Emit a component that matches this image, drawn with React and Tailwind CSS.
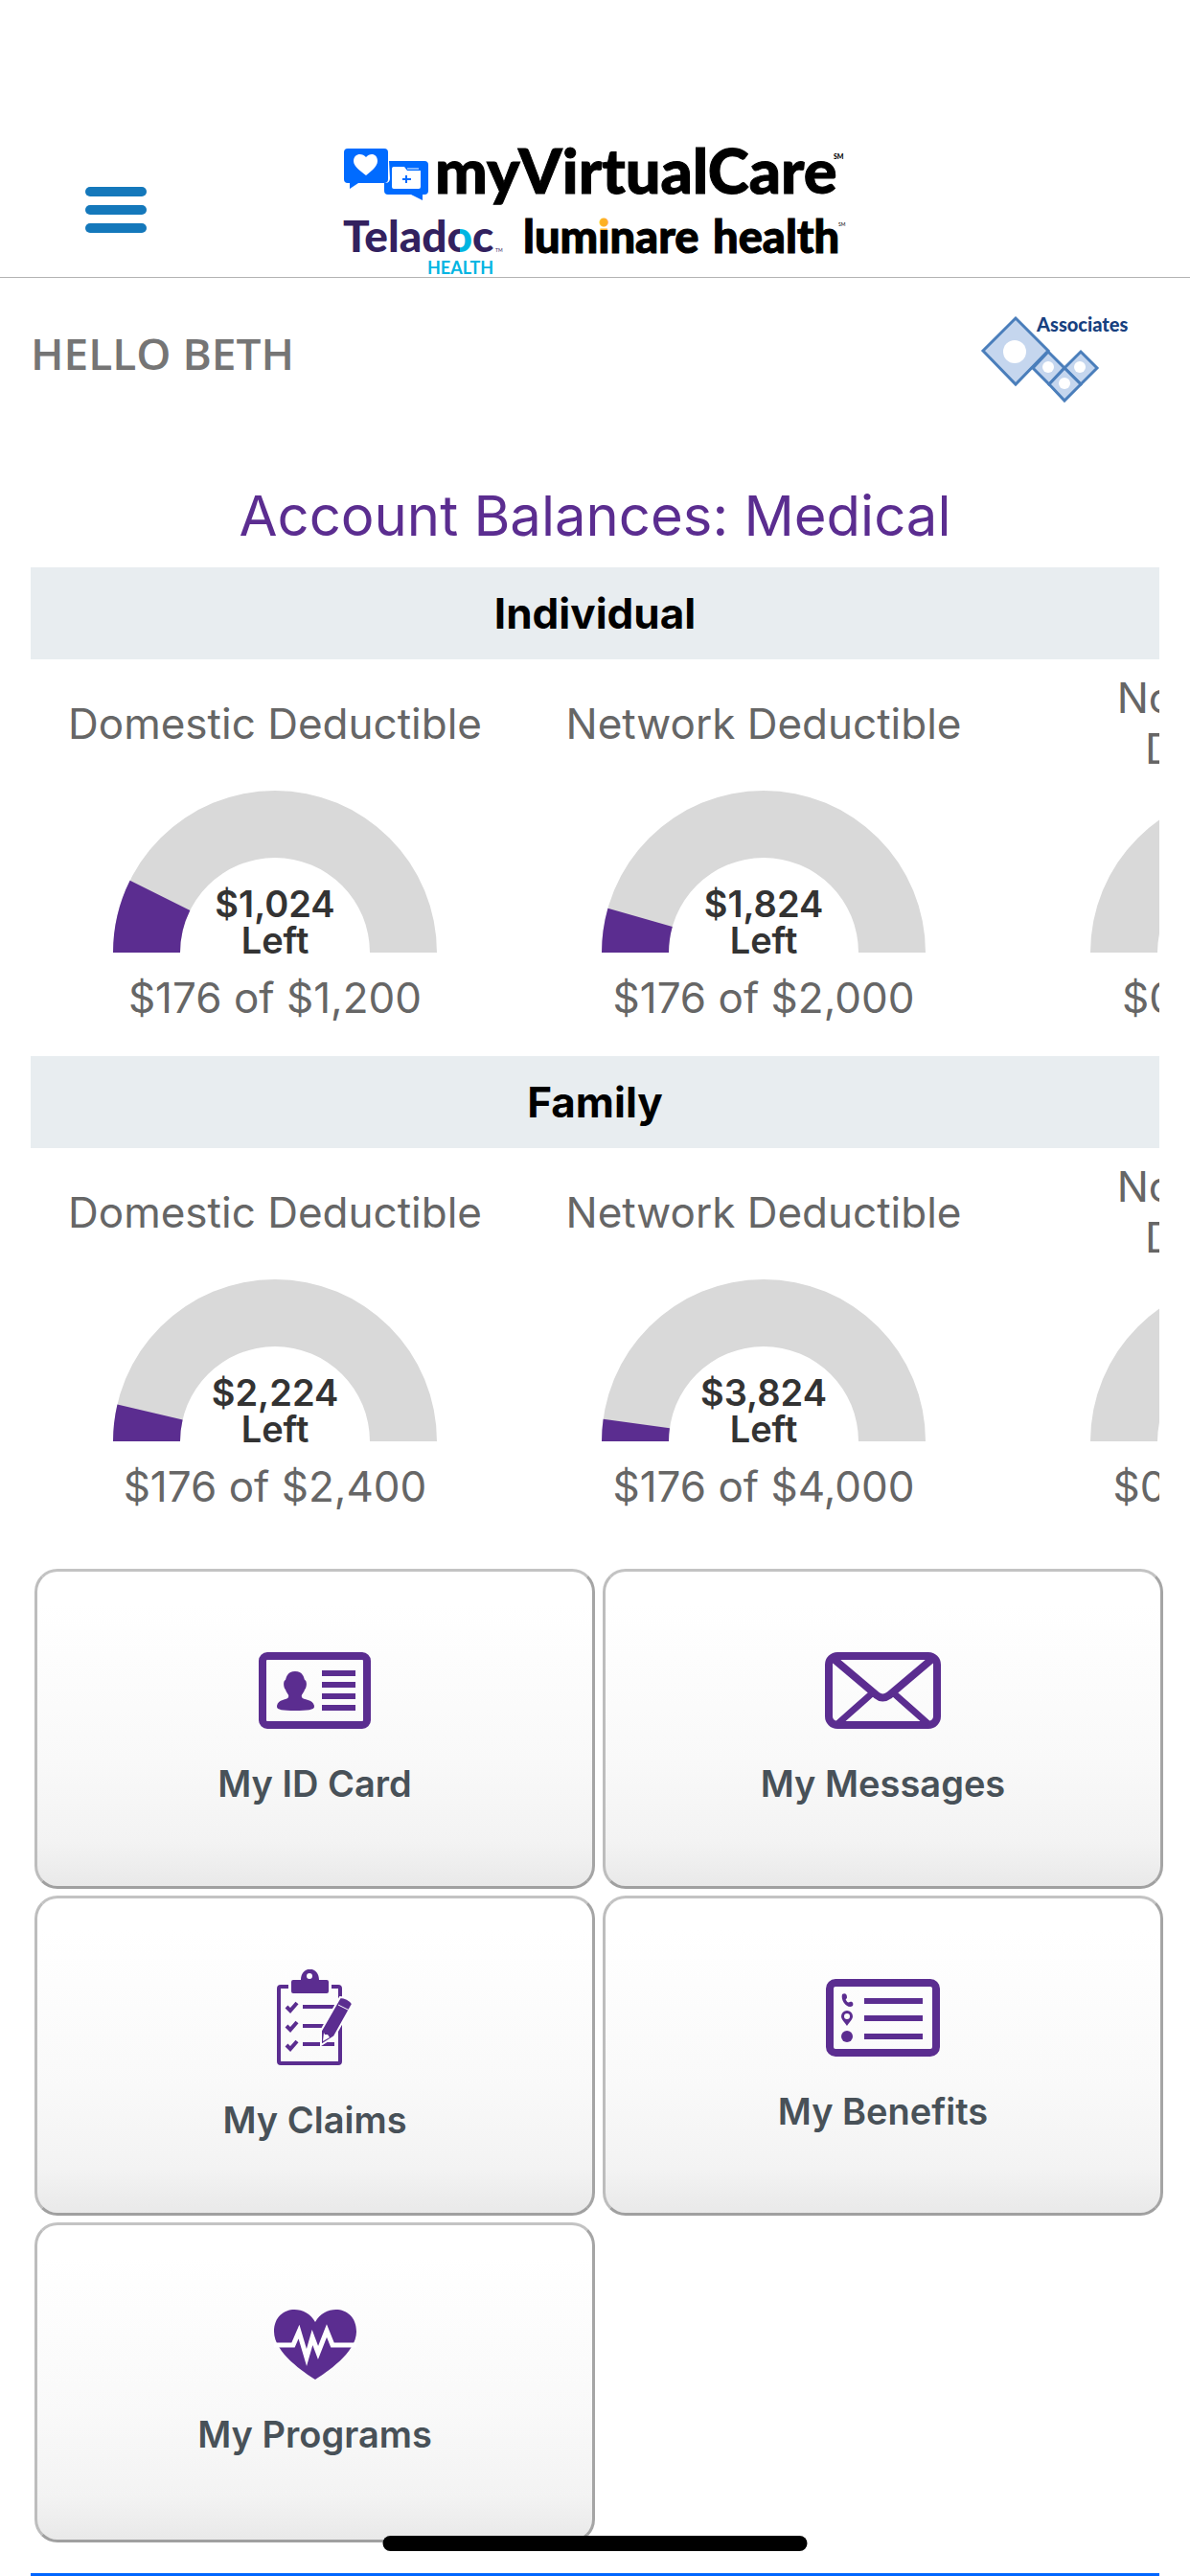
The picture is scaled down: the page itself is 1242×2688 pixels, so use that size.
const balances = [
  {
    title: "Individual",
    items: [
      { label: "Domestic Deductible", used: 176, total: 1200 },
      { label: "Network Deductible", used: 176, total: 2000 },
      { label: "Non-Network Deductible", used: 0, total: 5000 },
    ],
  },
  {
    title: "Family",
    items: [
      { label: "Domestic Deductible", used: 176, total: 2400 },
      { label: "Network Deductible", used: 176, total: 4000 },
      { label: "Non-Network Deductible", used: 0, total: 10000 },
    ],
  },
];

const money = (n) => "$" + n.toLocaleString("en-US");

function Logo() {
  return (
    <svg width="526" height="141" viewBox="358 148 526 141" className="overflow-visible" role="img" aria-label="myVirtualCare">
      <defs>
        {/* two-tone "o" and orange i-dot */}
        <linearGradient id="tone-o" gradientUnits="userSpaceOnUse" x1="466" y1="0" x2="494" y2="0">
          <stop offset="0.5" stopColor="#32215f" />
          <stop offset="0.5" stopColor="#00b5e2" />
        </linearGradient>
        <linearGradient id="tone-i" gradientUnits="userSpaceOnUse" x1="0" y1="230" x2="0" y2="249">
          <stop offset="0.5" stopColor="#fdb022" />
          <stop offset="0.5" stopColor="#000" />
        </linearGradient>
      </defs>

      {/* chat bubbles */}
      <path d="M363 155h38q4 0 4 4v28q0 4-4 4h-27l-9 6v-6h-2q-4 0-4-4v-28q0-4 4-4z" fill="#006bff" />
      <path
        d="M382 183c-5-4-13-9-13-15 0-8 9-9 13-4 4-5 12-4 12 4 0 6-7 11-12 15z"
        fill="#fff"
      />
      <path d="M406 168h37q4 0 4 4v27q0 4-4 4h-2v6l-12-6h-24q-4 0-4-4v-8h1q5 0 5-5z" fill="#006bff" />
      <path d="M409 176q0-2 2-2h11l3 4h14v17q0 2-2 2h-26q-2 0-2-2z" fill="#fff" />
      <path d="M425 176h12" stroke="#fff" strokeWidth="1" />
      <path d="M424 183v8M420 187h9" stroke="#006bff" strokeWidth="2" />

      <g fontFamily="Lato, sans-serif">
        <text x="454" y="202" fontSize="65" fontWeight="900" fill="#000" stroke="#000">myVirtualCare</text>
        <text x="870" y="166" fontSize="7" fontWeight="900" fill="#000">SM</text>
        <text x="358" y="263" fontSize="46" fontWeight="900" fill="#32215f">
          Telad<tspan fill="url(#tone-o)">o</tspan>c
        </text>
        <text x="517" y="263" fontSize="5" fill="#32215f">TM</text>
        <text x="446" y="286" fontSize="18" fontWeight="700" fill="#00b5e2">HEALTH</text>
        <text x="546" y="264" fontSize="47" fontWeight="900" fill="#000" stroke="#000">
          lum<tspan fill="url(#tone-i)" stroke="url(#tone-i)">i</tspan>nare
        </text>
        <text x="744" y="264" fontSize="47" fontWeight="900" fill="#000" stroke="#000">health</text>
        <text x="875" y="236" fontSize="5" fill="#000">SM</text>
      </g>
    </svg>
  );
}

function AssociatesLogo() {
  return (
    <svg width="154" height="90" viewBox="1023 330 154 90" className="overflow-visible" role="img" aria-label="Associates">
      <g fill="#c5d6ee" stroke="#4a7ebb" strokeWidth="3">
        <path d="M1059 332l34 34-34 35-34-35z" />
        <path d="M1093 367l17 17-16 17-17-17z" />
        <path d="M1127 367l17 17-17 17-17-17z" />
        <path d="M1110 384l17 17-17 17-16-17z" />
      </g>
      <g fill="#fff">
        <circle cx="1058" cy="367" r="12" />
        <circle cx="1093" cy="383" r="6" />
        <circle cx="1126" cy="383" r="6" />
        <circle cx="1110" cy="400" r="6" />
      </g>
      <text x="1081" y="346" fontSize="20" fontWeight="900" fontFamily="Lato, sans-serif" fill="#17407f">
        Associates
      </text>
    </svg>
  );
}

function Gauge({ used, total }) {
  // half ring, filled from the left end
  const angle = Math.PI * (used / total);
  const cos = Math.cos(angle);
  const sin = Math.sin(angle);
  const R = 169;
  const r = 99;

  return (
    <div className="relative mt-[17px]">
      <svg width="338" height="169" viewBox="0 0 338 169" aria-hidden="true">
        <path d="M0 169a169 169 0 0 1 338 0h-70a99 99 0 0 0-198 0z" fill="#d9d9d9" />
        {used > 0 && (
          <path
            d={`M0 169A${R} ${R} 0 0 1 ${R - R * cos} ${R - R * sin}L${R - r * cos} ${R - r * sin}A${r} ${r} 0 0 0 70 169z`}
            fill="#5b2d90"
          />
        )}
      </svg>
      <p className="absolute inset-x-0 -bottom-1.5 text-center text-[38px] leading-[38px] font-semibold text-[#333]">
        {money(total - used)}
        <br />
        Left
      </p>
    </div>
  );
}

function BalanceSection({ title, items }) {
  return (
    <section>
      <h2 className="bg-[#e8edf0] text-center text-[44px] leading-[96px] font-bold text-black">{title}</h2>
      <div className="flex overflow-x-auto pt-[14px] pb-[34px] [scrollbar-width:none]">
        {items.map((item) => (
          <div key={item.label} className="flex w-[510px] shrink-0 flex-col items-center text-[44px] leading-[53px] text-[#666]">
            <h3 className="flex h-[106px] items-center px-8 text-center">{item.label}</h3>
            <Gauge used={item.used} total={item.total} />
            <p className="mt-[21px]">
              {money(item.used)} of {money(item.total)}
            </p>
          </div>
        ))}
      </div>
    </section>
  );
}

function IdCardIcon() {
  return (
    <svg width="117" height="80" viewBox="0 0 117 80" fill="#5b2d90">
      <rect x="4" y="4" width="109" height="72" rx="5" fill="none" stroke="#5b2d90" strokeWidth="8" />
      <path d="M38 20c8 0 9 6 10 9 3 1 2 9 0 10-1 4-4 5-3 8 1 3 13 2 13 10 0 3-7 4-20 4s-19-1-19-4c0-8 11-7 12-10 1-3-2-4-3-8-2-1-3-9 0-10 1-3 2-9 10-9z" />
      <path d="M66 19h35v6H66zM66 31h35v6H66zM66 43h35v6H66zM66 55h35v6H66z" />
    </svg>
  );
}

function MailIcon() {
  return (
    <svg width="121" height="80" viewBox="0 0 121 80" fill="none" stroke="#5b2d90" strokeWidth="8">
      <rect x="4" y="4" width="113" height="72" rx="9" />
      <path d="M9 7l45 38q6 5 13 0l45-38" />
      <path d="M13 75l35-31M108 75L73 44" strokeWidth="7" />
    </svg>
  );
}

function ClaimsIcon() {
  return (
    <svg width="79" height="100" viewBox="0 0 79 100" fill="#5b2d90">
      <path d="M12 18H4q-2 0-2 2v76q0 2 2 2h60q2 0 2-2V20q0-2-2-2h-7" fill="none" stroke="#5b2d90" strokeWidth="4" />
      <path d="M17 11h8C25-4 44-4 44 11h8q2 0 2 2v10q0 2-2 2H17q-2 0-2-2V13q0-2 2-2z" />
      <ellipse cx="34" cy="7" rx="3" ry="3" fill="#fff" />
      <path
        d="M10 39l4 4 7-8M10 59l4 4 7-8M10 79l4 4 7-8"
        fill="none"
        stroke="#5b2d90"
        strokeWidth="4"
      />
      <path d="M27 37h33v4H27zM27 57h26v4H27zM27 76h33v4H27z" />
      {/* pencil */}
      <path d="M66 29q8 0 13 7L60 70 46 79V64z" stroke="#fff" strokeWidth="2" />
      <path d="M64 37l12 6" stroke="#fff" strokeWidth="1" />
      <path d="M49 66l1 2 3 0 2 3-7 4z" fill="#fff" />
    </svg>
  );
}

function BenefitsIcon() {
  return (
    <svg width="119" height="81" viewBox="0 0 119 81" fill="#5b2d90">
      <rect x="4" y="4" width="111" height="73" rx="6" fill="none" stroke="#5b2d90" strokeWidth="8" />
      <path d="M40 20h61v6H40zM40 38h61v6H40zM40 57h61v6H40z" />
      <path d="M17 16c3-2 5 0 5 3 0 2-2 2-1 3 1 2 2 3 4 2 3-1 4 2 3 4-5 4-13-5-11-12z" />
      <path
        d="M22 33a6 6 0 0 1 6 6c0 3-4 7-6 10-2-3-6-7-6-10a6 6 0 0 1 6-6zm0 3a3 3 0 1 0 0 6 3 3 0 0 0 0-6z"
        fillRule="evenodd"
      />
      <circle cx="22" cy="60" r="6" />
    </svg>
  );
}

function HeartIcon() {
  return (
    <svg width="86" height="73" viewBox="0 0 86 73">
      <path d="M43 73C32 66 0 45 0 23 0-4 32-7 43 13 54-7 86-4 86 23c0 22-32 43-43 50z" fill="#5b2d90" />
      <path d="M0 37h20l6-14 8 27 6-21 6 16 9-23 6 15h25" fill="none" stroke="#fff" strokeWidth="5" strokeMiterlimit="10" />
    </svg>
  );
}

const tiles = [
  { label: "My ID Card", Icon: IdCardIcon },
  { label: "My Messages", Icon: MailIcon },
  { label: "My Claims", Icon: ClaimsIcon },
  { label: "My Benefits", Icon: BenefitsIcon },
  { label: "My Programs", Icon: HeartIcon },
];

function App() {
  return (
    <div className="min-h-screen bg-white font-['Inter',sans-serif]">
      <header className="grid grid-cols-[1fr_auto_1fr] items-center border-b border-[#b3b3b3] pt-[148px]">
        <button type="button" aria-label="Menu" className="ml-[89px] flex w-16 flex-col gap-[9px]">
          <span className="h-[10px] rounded-full bg-[#1478bb]" />
          <span className="h-[10px] rounded-full bg-[#1478bb]" />
          <span className="h-[10px] rounded-full bg-[#1478bb]" />
        </button>
        <Logo />
      </header>

      <main className="px-8">
        <div className="flex items-start justify-between pt-10 pr-8">
          <p className="font-['Open_Sans',sans-serif] text-[46px] leading-[76px] font-semibold text-[#757575]">HELLO BETH</p>
          <AssociatesLogo />
        </div>

        <h1 className="mt-[82px] mb-[18px] text-center text-[58px] leading-[72px] text-[#5b2d90]">
          Account Balances: Medical
        </h1>

        {balances.map((group) => (
          <BalanceSection key={group.title} title={group.title} items={group.items} />
        ))}
      </main>

      <nav className="mt-[25px] grid grid-cols-2 gap-x-2 gap-y-[7px] pr-7 pl-9">
        {tiles.map(({ label, Icon }) => (
          <button
            key={label}
            type="button"
            className="flex h-[334px] flex-col items-center justify-center gap-[34px] rounded-3xl border-3 border-t-[#c3c3c3] border-r-[#a5a5a5] border-b-[#a0a0a0] border-l-[#bdbdbd] bg-[linear-gradient(#fff_10%,#f9f9f9_60%,#f3f3f3_86%,#e9e9e9)] text-[38px] leading-[46px] font-semibold text-[#485158]"
          >
            <Icon />
            {label}
          </button>
        ))}
      </nav>

      <div className="mx-8 mt-8 h-[3px] bg-[#0066ff]" />

      {/* home indicator */}
      <div className="fixed bottom-[26px] left-1/2 h-4 w-[443px] -translate-x-1/2 rounded-full bg-black" />
    </div>
  );
}

export default App;
